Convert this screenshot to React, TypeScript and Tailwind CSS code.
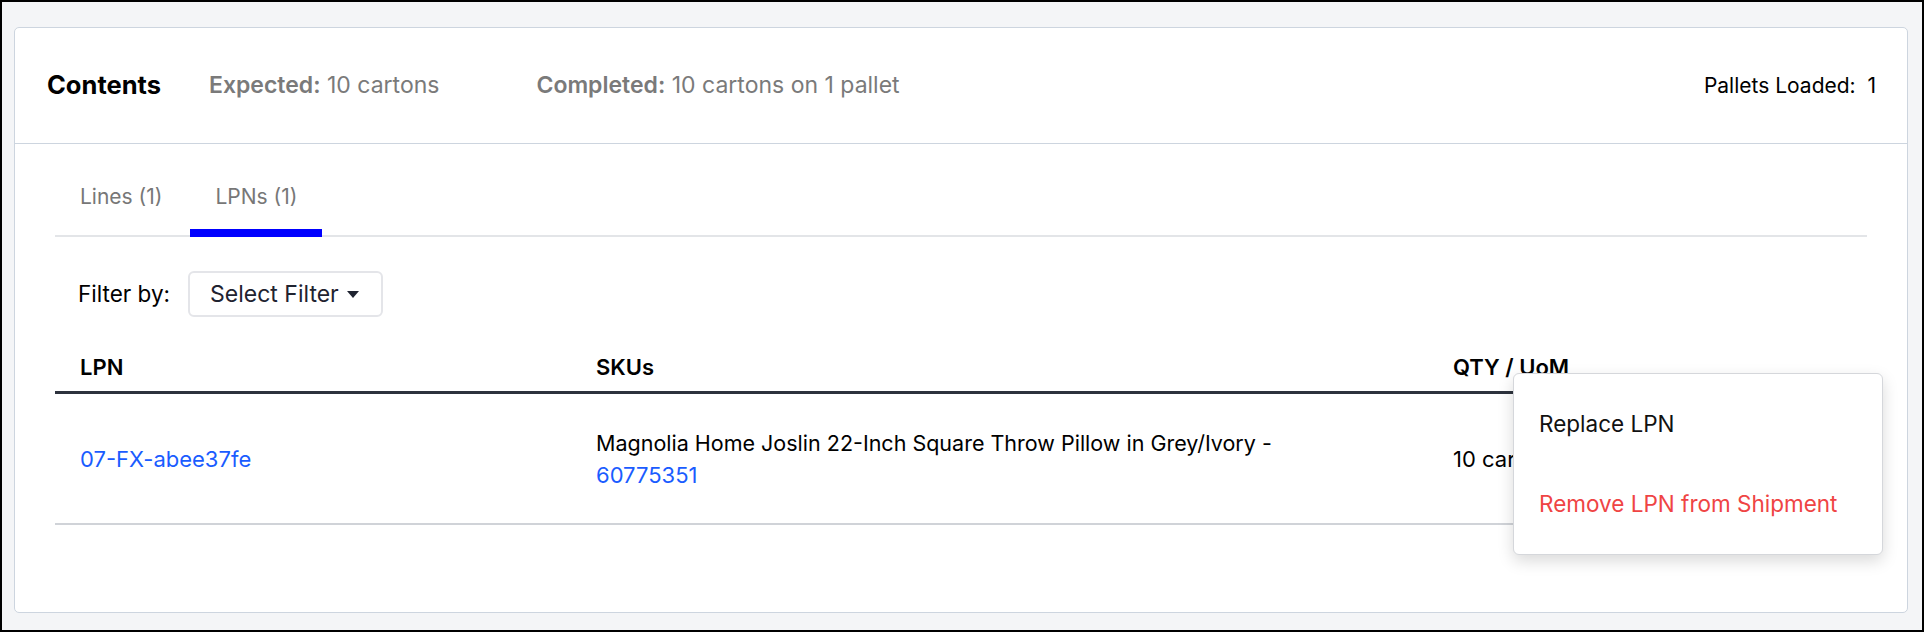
import { useState } from 'react';

type Lpn = {
  id: string;
  sku: string;
  skuId: string;
  qty: string;
};

const lpns: Lpn[] = [
  {
    id: '07-FX-abee37fe',
    sku: 'Magnolia Home Joslin 22-Inch Square Throw Pillow in Grey/Ivory -',
    skuId: '60775351',
    qty: '10 cartons',
  },
];

export default function App() {
  const [tab, setTab] = useState('lpns');

  return (
    <div
      className="w-full h-[632px] border-2 border-black bg-[#f4f5f7] pl-[12px] pr-[14px] pt-[25px] pb-[17px]"
      style={{ fontFamily: 'Inter, "Noto Sans", sans-serif' }}
    >
      <div className="relative h-full rounded-[5px] border border-[#cdd5df] bg-white">
        {/* header */}
        <div className="flex h-[116px] items-center border-b border-[#cdd5df] pl-[32px] pr-[31px]">
          <h2 className="text-[25.5px] font-bold text-black">Contents</h2>
          <div className="ml-[48px] text-[23px] text-[#7a7a7a]">
            <span className="font-semibold">Expected:</span> 10 cartons
          </div>
          <div className="ml-[97px] text-[23px] text-[#7a7a7a]">
            <span className="font-semibold">Completed:</span> 10 cartons on 1 pallet
          </div>
          <div className="ml-auto text-[21px] text-black">Pallets Loaded:&nbsp; 1</div>
        </div>

        <div className="px-[40px]">
          {/* tabs */}
          <div className="flex gap-[3px] border-b-2 border-[#e3e5e8] pt-[41px]">
            <button
              onClick={() => setTab('lines')}
              className={`-mb-[2px] border-b-8 px-[25px] pb-[20px] text-[21px] leading-[24px] text-[#777] ${
                tab === 'lines' ? 'border-[#0000ff]' : 'border-transparent'
              }`}
            >
              Lines (1)
            </button>
            <button
              onClick={() => setTab('lpns')}
              className={`-mb-[2px] border-b-8 px-[25px] pb-[20px] text-[21px] leading-[24px] text-[#777] ${
                tab === 'lpns' ? 'border-[#0000ff]' : 'border-transparent'
              }`}
            >
              LPNs (1)
            </button>
          </div>

          {/* filter */}
          <div className="mt-[34px] flex items-center pl-[23px]">
            <span className="text-[22.5px] text-black">Filter by:</span>
            <button className="ml-[18px] flex h-[46px] w-[195px] items-center rounded-[6px] border-2 border-[#e4e5e9] pl-[20px] text-[23px] text-[#1f2330]">
              Select Filter
              <svg className="ml-[8px]" width="12" height="7" viewBox="0 0 12 7">
                <path d="M0 0h12L6 7z" fill="#1f2330" />
              </svg>
            </button>
          </div>

          {/* table */}
          <div className="mt-[26px]">
            <div className="grid grid-cols-[516px_857px_1fr] border-b-[3px] border-[#2d323d] py-[12px] text-[22px] font-semibold leading-[24px] text-black">
              <div className="px-[25px]">LPN</div>
              <div className="px-[25px]">SKUs</div>
              <div className="px-[25px]">QTY / UoM</div>
            </div>
            {lpns.map((l) => (
              <div
                key={l.id}
                className="grid h-[131px] grid-cols-[516px_857px_1fr] items-center border-b-2 border-[#d0d3d8] text-[22px] leading-[32px]"
              >
                <div className="px-[25px] text-[#1a5cff]">{l.id}</div>
                <div className="px-[25px] text-black">
                  <div className="text-[21.5px]">{l.sku}</div>
                  <div className="text-[#1a5cff]">{l.skuId}</div>
                </div>
                <div className="px-[25px] text-black">{l.qty}</div>
              </div>
            ))}
          </div>
        </div>

        {/* row actions menu */}
        <div className="absolute right-[24px] top-[345px] w-[370px] rounded-[6px] border border-[#d5d7db] bg-white py-[10px] shadow-[0_6px_16px_rgba(0,0,0,0.15)]">
          <div className="flex h-[80px] items-center pl-[25px] text-[22.5px] text-[#111]">Replace LPN</div>
          <div className="flex h-[80px] items-center pl-[25px] text-[22.5px] text-[#ef4444]">
            Remove LPN from Shipment
          </div>
        </div>
      </div>
    </div>
  );
}
